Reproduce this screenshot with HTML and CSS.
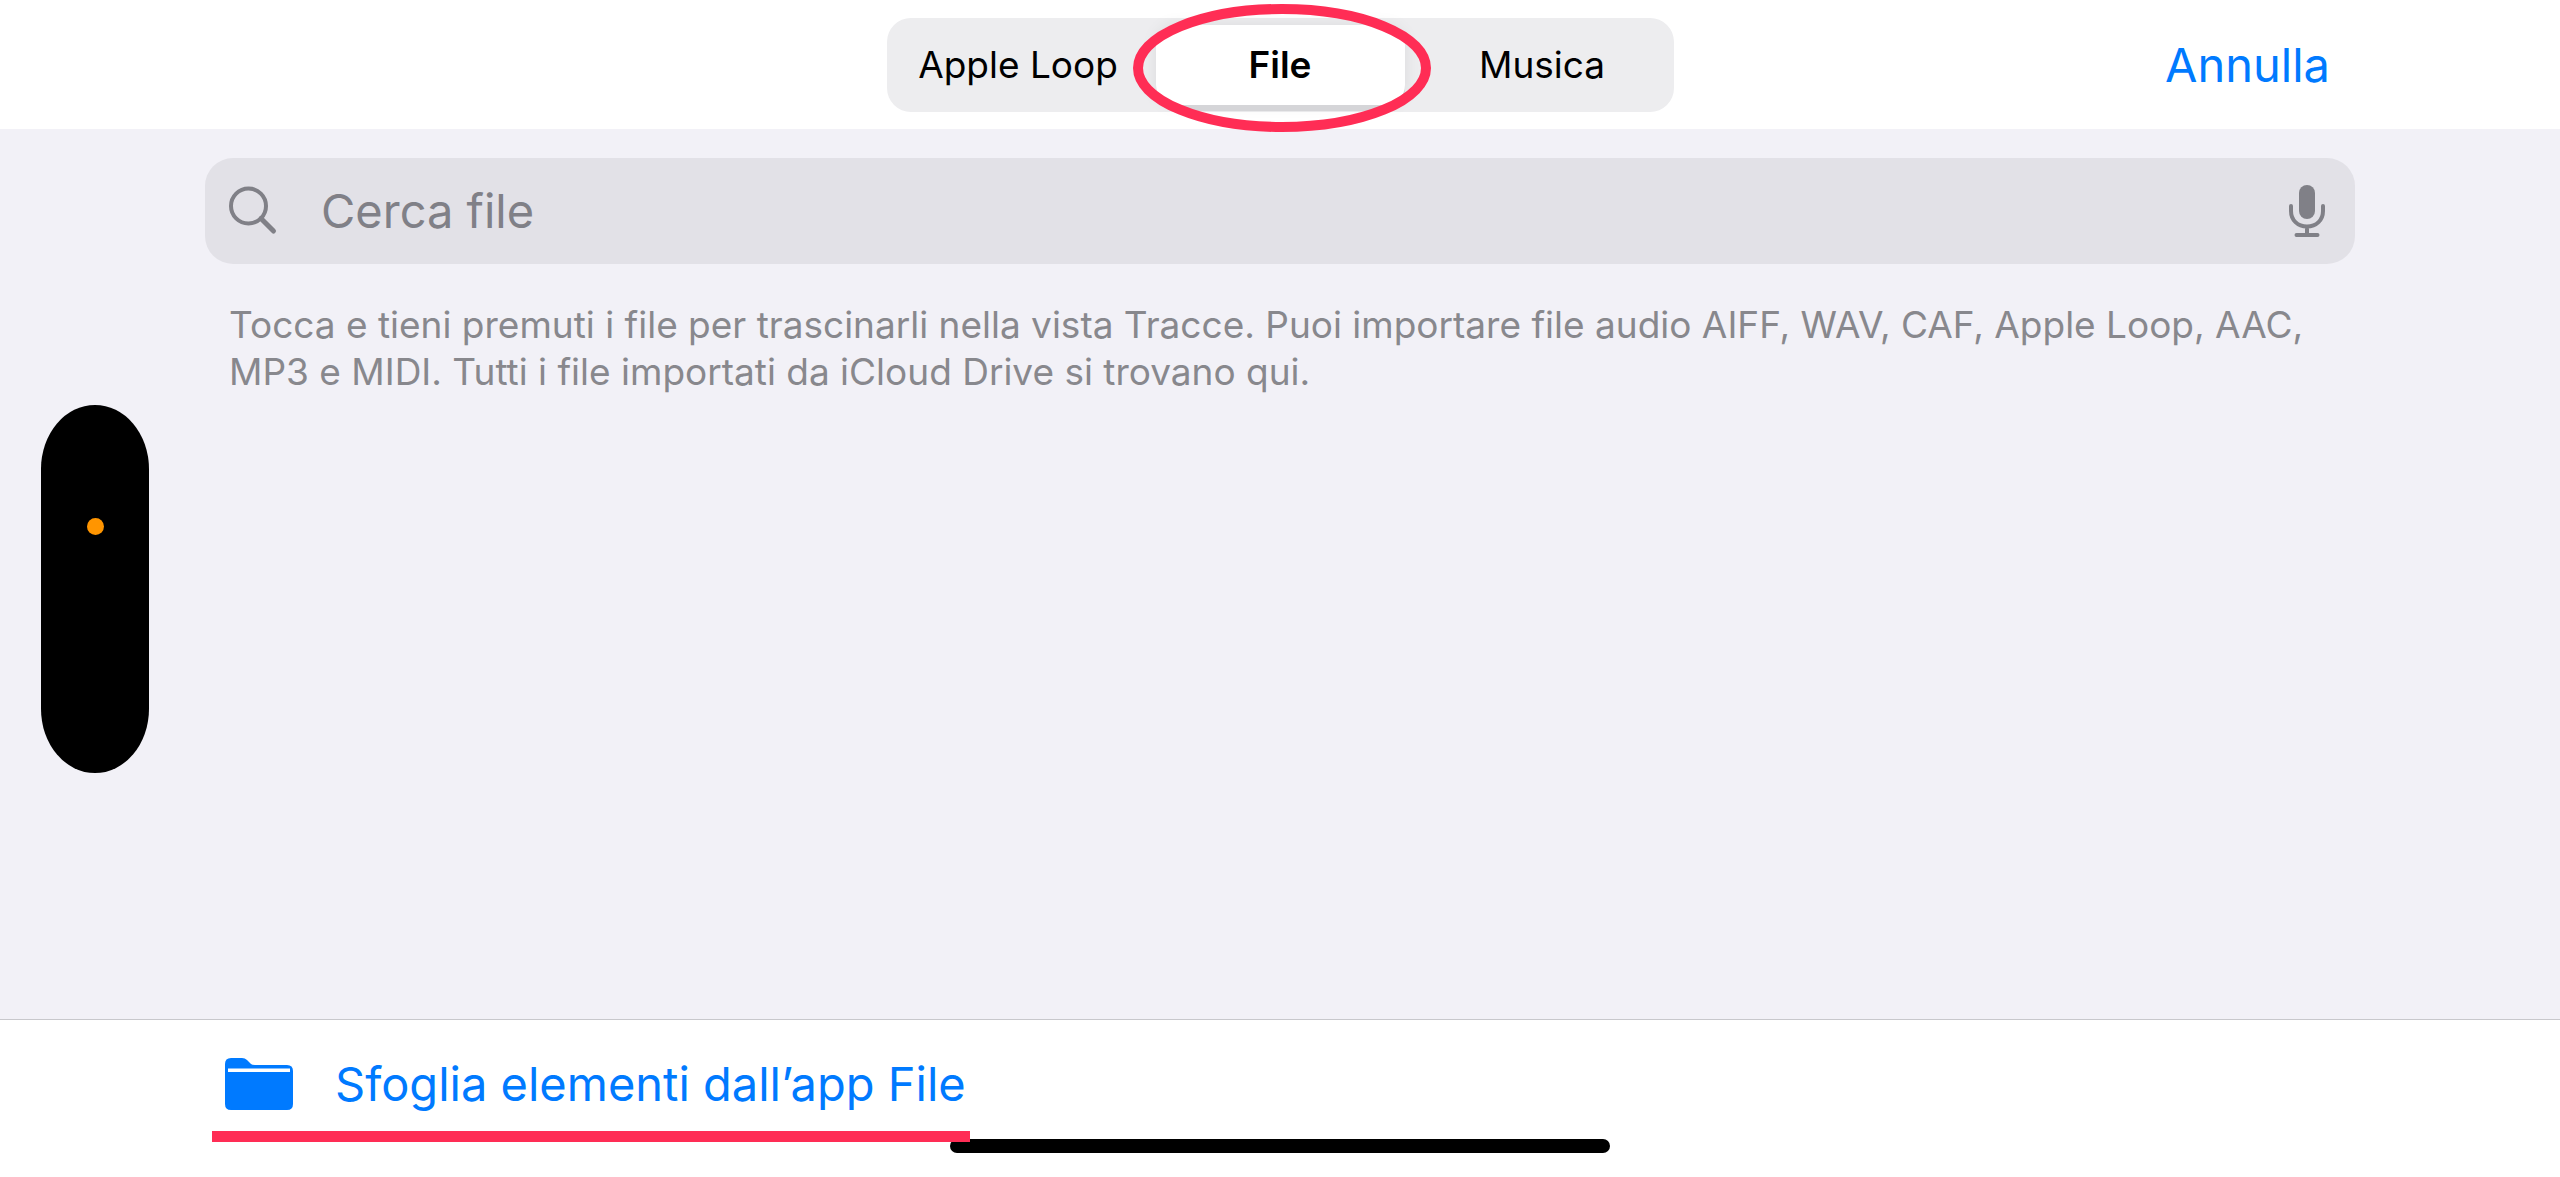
FILE: index.html
```
<!DOCTYPE html>
<html lang="it">

<head>
    <meta charset="UTF-8">
    <meta name="viewport" content="width=device-width, initial-scale=1.0">
    <title>Browser Loop</title>
    <link rel="stylesheet" href="styles.css">
</head>

<body>
    <header class="topbar">
        <div class="tabs">
            <button class="tab" type="button">Apple Loop</button>
            <button class="tab active" type="button">File
                <svg class="circle-mark" viewBox="0 0 298 128" aria-hidden="true">
                    <ellipse cx="149" cy="64" rx="144" ry="59" />
                </svg>
            </button>
            <button class="tab" type="button">Musica</button>
        </div>
        <button class="cancel" type="button">Annulla</button>
    </header>

    <main class="content">
        <div class="search">
            <label class="search-icon" for="search-file" aria-label="Cerca file">
                <svg width="50" height="50" viewBox="0 0 50 50">
                    <circle cx="19.500" cy="20" r="17.500" />
                    <path d="M32 32.500L44.500 45" />
                </svg>
            </label>
            <input type="text" id="search-file" placeholder="Cerca file">
            <button class="mic" type="button" aria-label="Dettatura">
                <svg width="36" height="52" viewBox="0 0 36 52">
                    <rect x="10" y="0" width="16" height="34" rx="8" />
                    <path d="M2 21v5c0 9 6.500 15.500 16 15.500s16-6.500 16-15.500v-5M18 42v8M7.500 50h21" />
                </svg>
            </button>
        </div>
        <p class="hint">Tocca e tieni premuti i file per trascinarli nella vista Tracce. Puoi importare file audio AIFF, WAV, CAF, Apple Loop, AAC, MP3 e MIDI. Tutti i file importati da iCloud Drive si trovano qui.</p>
    </main>

    <footer class="bottombar">
        <button class="browse" type="button">
            <svg width="68" height="52" viewBox="0 0 68 52" aria-hidden="true">
                <path class="folder" d="M0 6Q0 0 6 0H17Q20 0 22 2L26 6Q27 7 30 7H62Q68 7 68 13V46Q68 52 62 52H6Q0 52 0 46Z" />
                <path class="folder-slot" d="M3 10.500H65V14H3Z" />
            </svg>
            <span>Sfoglia elementi dall’app File</span>
        </button>
    </footer>

    <!-- Device overlays -->
    <div class="island"><span class="island-dot"></span></div>
    <div class="home-indicator"></div>
</body>

</html>
```
FILE: styles.css
```
* {
    box-sizing: border-box;
}

body {
    position: relative;
    display: flex;
    flex-direction: column;
    min-height: 100vh;
    margin: 0;
    background-color: #f2f1f7;
    font-family: Inter, "Liberation Sans", sans-serif;
}

button {
    padding: 0;
    border: none;
    background: none;
    font-family: inherit;
    cursor: pointer;
}

/* Top bar */
.topbar {
    display: grid;
    grid-template-columns: 1fr auto 1fr;
    align-items: center;
    padding: 18px 230px 17px;
    background-color: #fff;
}

.tabs {
    grid-column: 2;
    display: grid;
    grid-template-columns: repeat(3, 249px);
    gap: 13px;
    padding: 7px;
    border-radius: 24px;
    background-color: #ededef;
}

.tab {
    position: relative;
    height: 80px;
    color: #000;
    font-size: 37px;
    font-weight: 400;
    line-height: 48px;
    white-space: nowrap;
}

.tab.active {
    border-radius: 20px;
    background-color: #fff;
    box-shadow: 0 6px 0 #d5d5d8, 0 0 16px rgba(0, 0, 0, 0.08);
    font-weight: 600;
}

/* Hand-drawn style highlight around the active tab */
.circle-mark {
    position: absolute;
    top: -21px;
    left: -23px;
    width: 298px;
    height: 128px;
    fill: none;
    stroke: #ff2d55;
    stroke-width: 10;
    pointer-events: none;
}

.cancel {
    justify-self: end;
    color: #007aff;
    font-size: 47px;
    line-height: 60px;
}

/* Search */
.content {
    flex: 1;
    padding: 29px 205px;
}

.search {
    display: flex;
    align-items: center;
    height: 106px;
    padding: 0 30px 0 24px;
    border-radius: 28px;
    background-color: #e2e1e7;
}

.search svg {
    display: block;
    fill: none;
    stroke: #808087;
    stroke-width: 4;
    stroke-linecap: round;
}

.search-icon path {
    stroke-width: 5;
}

.search input {
    flex: 1;
    min-width: 0;
    margin: 0 42px;
    padding: 0;
    border: none;
    outline: none;
    background: none;
    color: #000;
    font-family: inherit;
    font-size: 47px;
    line-height: 60px;
}

.search input::placeholder {
    color: #808087;
    opacity: 1;
}

.mic rect {
    fill: #808087;
    stroke: none;
}

.mic svg {
    overflow: visible;
}

.hint {
    margin: 37px 24px 0;
    color: #88888d;
    font-size: 37px;
    line-height: 47px;
}

/* Bottom bar */
.bottombar {
    height: 158px;
    padding-left: 212px;
    border-top: 1px solid #c8c8cc;
    background-color: #fff;
}

.browse {
    position: relative;
    z-index: 1;
    display: flex;
    align-items: center;
    gap: 42px;
    height: 122px;
    padding: 16px 4px 0 13px;
    border-bottom: 11px solid #ff2d55;
    color: #007aff;
    font-size: 47px;
    line-height: 60px;
    white-space: nowrap;
}

.folder {
    fill: #007aff;
}

.folder-slot {
    fill: #fff;
}

/* Device overlays */
.island {
    position: absolute;
    top: 50%;
    left: 41px;
    width: 108px;
    height: 368px;
    transform: translateY(-50%);
    border-radius: 54px / 64px;
    background-color: #000;
}

.island-dot {
    position: absolute;
    top: 113px;
    left: 46px;
    width: 17px;
    height: 17px;
    border-radius: 50%;
    background-color: #ff9500;
}

.home-indicator {
    position: absolute;
    bottom: 24px;
    left: 50%;
    width: 660px;
    height: 14px;
    transform: translateX(-50%);
    border-radius: 7px;
    background-color: #000;
}
```
